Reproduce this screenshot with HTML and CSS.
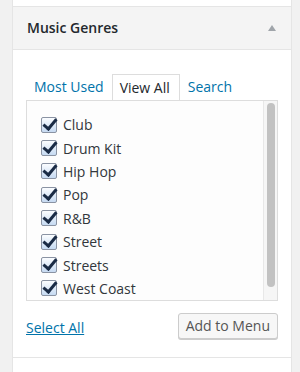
FILE: index.html
```html
<!DOCTYPE html>
<html lang="en">
<head>
    <meta charset="UTF-8">
    <meta name="viewport" content="width=device-width, initial-scale=1.0">
    <title>Music Genres</title>
    <link rel="stylesheet" href="styles.css">
</head>
<body>
    <div class="column">
        <div class="prev-box"></div>

        <div class="postbox">
            <div class="box-header">
                <h3>Music Genres</h3>
                <span class="toggle"></span>
            </div>

            <div class="box-inside">
                <ul class="tabs">
                    <li><a href="#">Most Used</a></li>
                    <li class="active"><a href="#">View All</a></li>
                    <li><a href="#">Search</a></li>
                </ul>

                <div class="tab-panel">
                    <ul class="checklist">
                        <li><label><input type="checkbox" checked> Club</label></li>
                        <li><label><input type="checkbox" checked> Drum Kit</label></li>
                        <li><label><input type="checkbox" checked> Hip Hop</label></li>
                        <li><label><input type="checkbox" checked> Pop</label></li>
                        <li><label><input type="checkbox" checked> R&amp;B</label></li>
                        <li><label><input type="checkbox" checked> Street</label></li>
                        <li><label><input type="checkbox" checked> Streets</label></li>
                        <li><label><input type="checkbox" checked> West Coast</label></li>
                    </ul>
                    <div class="scrollbar"><span class="thumb"></span></div>
                </div>

                <div class="box-actions">
                    <a href="#" class="select-all">Select All</a>
                    <button class="button">Add to Menu</button>
                </div>
            </div>
        </div>

        <div class="next-box"></div>
    </div>
</body>
</html>
```

FILE: styles.css
```css
body {
    margin: 0;
    padding: 0;
    background-color: #f1f1f1;
    font-family: 'Open Sans', 'Noto Sans', sans-serif;
    color: #444;
    font-size: 14px;
    overflow: hidden;
}

.column {
    width: 280px;
    margin-left: 12px;
}

.prev-box {
    height: 6px;
    background-color: #fff;
    border-left: 1px solid #e5e5e5;
    border-right: 1px solid #e5e5e5;
    border-bottom: 1px solid #e5e5e5;
}

.postbox {
    background-color: #fff;
    border-left: 1px solid #e5e5e5;
    border-right: 1px solid #e5e5e5;
    border-bottom: 1px solid #e5e5e5;
}

.next-box {
    height: 20px;
    background-color: #fff;
    border-left: 1px solid #e5e5e5;
    border-right: 1px solid #e5e5e5;
}

.box-header {
    display: flex;
    align-items: center;
    justify-content: space-between;
    height: 42px;
    padding: 0 14px;
    background-color: #f4f4f4;
    border-bottom: 1px solid #e5e5e5;
}

.box-header h3 {
    margin: 0;
    font-size: 14px;
    font-weight: 600;
    color: #23282d;
    position: relative;
    top: -1px;
}

.toggle {
    width: 0;
    height: 0;
    border-left: 4px solid transparent;
    border-right: 4px solid transparent;
    border-bottom: 6px solid #a0a5aa;
    margin-right: 1px;
}

.box-inside {
    height: 307px;
    box-sizing: border-box;
    padding: 23px 13px 0 13px;
}

.tabs {
    display: flex;
    list-style: none;
    margin: 0;
    padding: 0;
}

.tabs a {
    display: block;
    padding: 3px 7px 4px 7px;
    line-height: 19px;
    color: #0073aa;
    text-decoration: none;
    border: 1px solid transparent;
    border-bottom: none;
    font-size: 14px;
}

.tabs .active a {
    color: #23282d;
    background-color: #fff;
    border-color: #ddd;
    position: relative;
    top: 1px;
    padding: 3px 9px 3px 7px;
}

.tab-panel {
    display: flex;
    border: 1px solid #ddd;
    background-color: #fdfdfd;
    height: 199px;
    overflow: hidden;
}

.checklist {
    flex: 1;
    list-style: none;
    margin: 0;
    padding: 12px 0 0 14px;
}

.checklist li {
    height: 23.4px;
    display: flex;
    align-items: center;
}

.checklist label {
    display: flex;
    align-items: center;
    gap: 6px;
    color: #32373c;
    font-size: 14px;
}

.checklist input {
    appearance: none;
    -webkit-appearance: none;
    width: 16px;
    height: 16px;
    margin: 0;
    border: 1px solid #8a93a3;
    border-radius: 2px;
    background: linear-gradient(#fbfdff, #c6daf2);
    position: relative;
}

.checklist input:checked::after {
    content: "";
    position: absolute;
    left: 4px;
    top: -2px;
    width: 5px;
    height: 11px;
    border-right: 3px solid #1a2b45;
    border-bottom: 3px solid #1a2b45;
    transform: rotate(40deg);
}

.scrollbar {
    width: 14px;
    padding: 2px 2px 0 3px;
    box-sizing: border-box;
    background-color: #f6f6f6;
    border-left: 1px solid #e8e8e8;
}

.thumb {
    display: block;
    height: 184px;
    background-color: #c2c2c2;
    border-radius: 5px;
}

.box-actions {
    display: flex;
    align-items: center;
    justify-content: space-between;
    margin-top: 12px;
}

.select-all {
    color: #0073aa;
    font-size: 14px;
    text-decoration: underline;
    position: relative;
    top: 1px;
}

.button {
    font-family: inherit;
    font-size: 14px;
    color: #555;
    background-color: #f7f7f7;
    border: 1px solid #ccc;
    border-radius: 3px;
    box-shadow: 0 1px 0 #ccc;
    height: 26px;
    padding: 0 7px;
    line-height: 24px;
    cursor: pointer;
}
```
